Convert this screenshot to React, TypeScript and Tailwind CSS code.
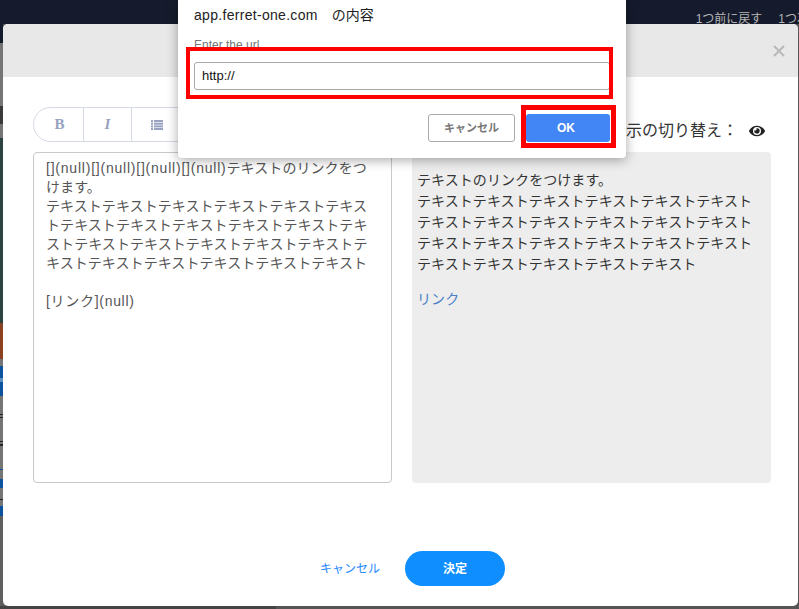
import { FaEye } from "react-icons/fa";

const jp = "font-['Liberation_Sans','Noto_Sans_CJK_JP',sans-serif]";
const G = "bg-[#757575]";
const B = "bg-[#0b539f]";
const D = "bg-[#222222]";

const strip: [number, string][] = [
  [19, "bg-[#151b2c]"],
  [63, G],
  [18, "bg-[#3a3a3a]"],
  [14, G],
  [185, "bg-[#2a4240]"],
  [36, "bg-[#8a4221]"],
  [7, G],
  [12, B],
  [4, "bg-[#5b8fbf]"],
  [14, B],
  [18, G],
  [1, D],
  [2, G],
  [1, D],
  [23, G],
  [1, D],
  [2, G],
  [2, D],
  [23, G],
  [1, B],
  [9, G],
  [9, B],
  [11, G],
  [1, D],
  [6, G],
  [10, B],
  [93, "bg-[#5f5f5f]"],
];

const T = "テキスト";

function ListIcon() {
  return (
    <svg width="12" height="10" viewBox="0 0 12 10" className="text-[#98a2bf]">
      <g fill="currentColor">
        <rect x="0" y="0" width="2" height="2" />
        <rect x="3" y="0" width="9" height="2" />
        <rect x="0" y="2.7" width="2" height="2" />
        <rect x="3" y="2.7" width="9" height="2" />
        <rect x="0" y="5.4" width="2" height="2" />
        <rect x="3" y="5.4" width="9" height="2" />
        <rect x="0" y="8" width="2" height="2" />
        <rect x="3" y="8" width="9" height="2" />
      </g>
    </svg>
  );
}

export default function App() {
  return (
    <div className={`relative h-[609px] w-[799px] overflow-hidden bg-[#555555] ${jp}`}>
      {/* page behind the modal */}
      <div className="flex h-[24px] items-start justify-end gap-4 overflow-hidden bg-[#151b2c] pt-[10px] text-[12px] leading-[18px] whitespace-nowrap text-[#b5b5b5]">
        <span>1つ前に戻す</span>
        <span className="-mr-[46px]">1つ次に進む</span>
      </div>
      <div className="flex w-[3px] flex-col">
        {strip.map(([h, c], i) => (
          <div key={i} className={c} style={{ height: h }} />
        ))}
      </div>
      <div className="absolute bottom-0 left-0 h-[3px] w-[276px] bg-[#444444]" />

      {/* modal */}
      <div className="absolute top-[24px] left-[3px] flex h-[582px] w-[795px] flex-col overflow-hidden rounded-[5px] bg-white">
        <div className="flex h-[53px] shrink-0 items-center justify-end bg-[#e8e8e8] pr-[13px]">
          <svg width="12" height="12" viewBox="0 0 12 12" className="text-[#b9b9b9]">
            <path d="M1 1 L11 11 M11 1 L1 11" stroke="currentColor" strokeWidth="2" />
          </svg>
        </div>
        <div className="pt-[30px] pr-[27px] pl-[30px]">
          <div className="mb-[10px] flex h-[35px] items-start justify-between">
            <div className="flex h-[35px] w-[300px] rounded-l-full border border-[#d5d9e5] font-['Liberation_Serif',serif] text-[15px] text-[#98a2bf]">
              <div className="flex w-[50px] items-center justify-center border-r border-[#d5d9e5] pl-[2px] font-bold">
                B
              </div>
              <div className="flex w-[48px] items-center justify-center border-r border-[#d5d9e5] font-bold italic">
                I
              </div>
              <div className="flex w-[52px] items-center justify-center pr-[2px]">
                <ListIcon />
              </div>
            </div>
            <div className="mt-[12px] flex h-[24px] items-center gap-[11px] pr-[6px] text-[16px] text-[#333333]">
              <span>表示の切り替え：</span>
              <FaEye size={16} className="text-[#222222]" />
            </div>
          </div>
          <div className="flex gap-[20px]">
            <div className="h-[331px] w-[359px] rounded-[4px] border border-[#c9c9c9] pt-[6px] pr-[14px] pl-[12px] text-[14px] leading-[19px] tracking-[0.07px] break-all text-[#555555]">
              <div className="tracking-[0.78px]">
                [](null)[](null)[](null)[](null)
                <span className="tracking-[0.07px]">テキストのリンクをつけます。</span>
              </div>
              <div>{T.repeat(23)}</div>
              <div className="mt-[19px] tracking-[0.7px]">[リンク](null)</div>
            </div>
            <div className="h-[331px] w-[359px] rounded-[4px] bg-[#ededed] px-[5px] pt-[18px] text-[14px] leading-[21px] tracking-[0.07px] text-[#333333]">
              <div>テキストのリンクをつけます。</div>
              <div>{T.repeat(6)}</div>
              <div>{T.repeat(6)}</div>
              <div>{T.repeat(6)}</div>
              <div>{T.repeat(5)}</div>
              <div className="mt-[14px] text-[#4a7fc7]">リンク</div>
            </div>
          </div>
          <div className="mt-[68px] flex items-center gap-[25px] pl-[287px]">
            <span className="text-[12px] text-[#1e88ff]">キャンセル</span>
            <div className="flex h-[35px] w-[100px] items-center justify-center rounded-full bg-[#0f8fff] text-[12px] font-bold text-white">
              決定
            </div>
          </div>
        </div>
      </div>

      {/* browser prompt */}
      <div className="absolute top-0 left-[178px] h-[158px] w-[448px] rounded-b-[4px] bg-white px-[16px] pt-[5px] shadow-[0_2px_12px_rgba(0,0,0,0.35)]">
        <div className="text-[14px] leading-[20px] text-[#222222]">
          <span className="mr-[14px] tracking-[0.3px]">app.ferret-one.com</span>の内容
        </div>
        <div className="mt-[11px] text-[12px] leading-[18px] text-[#757575]">Enter the url</div>
        <div className="mt-[8px] flex h-[28px] items-center rounded-[3px] border border-[#aaaaaa] px-[7px] text-[13px] text-[#111111]">
          http://
        </div>
        <div className="mt-[24px] flex justify-end gap-[11px]">
          <div className="flex h-[28px] w-[87px] items-center justify-center rounded-[3px] border border-[#aaaaaa] text-[11px] font-bold text-[#777777]">
            キャンセル
          </div>
          <div className="flex h-[28px] w-[84px] items-center justify-center rounded-[3px] bg-[#4285f4] pr-[4px] text-[12px] font-bold text-white">
            OK
          </div>
        </div>
      </div>

      {/* red annotation frames */}
      <div className="absolute top-[47px] left-[186px] h-[52px] w-[427px] border-4 border-[#ff0000]" />
      <div className="absolute top-[105px] left-[521px] h-[43px] w-[95px] border-[5px] border-[#ff0000]" />
    </div>
  );
}
